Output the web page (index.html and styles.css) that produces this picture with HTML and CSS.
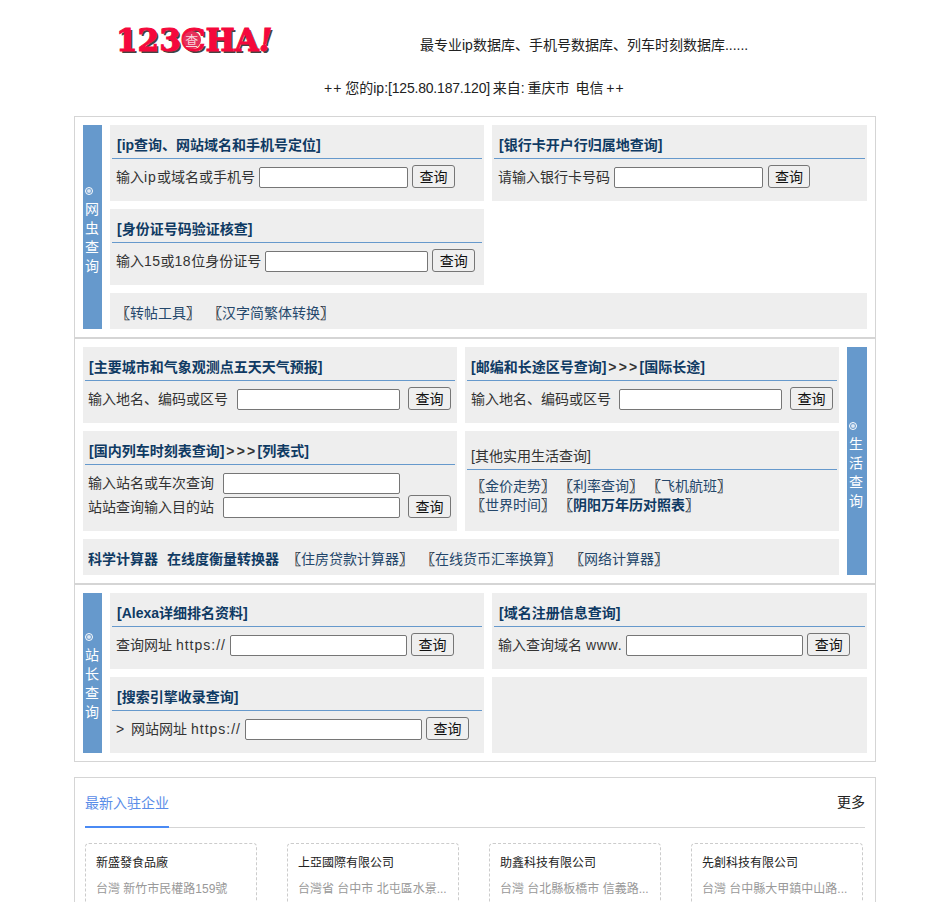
FILE: index.html
```html
<!DOCTYPE html>
<html lang="zh-CN">

<head>
    <meta charset="UTF-8">
    <title>123cha</title>
    <link rel="stylesheet" href="styles.css">
</head>

<body>
    <div class="top">
        <div class="logo">123<span class="logo-c">C<i>查</i></span>HA<em>!</em></div>
        <div class="slogan">最专业ip数据库、手机号数据库、列车时刻数据库......</div>
    </div>
    <div class="myip"><span class="plus">++</span> 您的ip:<span class="addr">[125.80.187.120]</span> 来自: 重庆市&nbsp; 电信 <span class="plus">++</span></div>

    <div class="wrap">
        <div class="sec sec-a">
            <div class="side side-19"><b></b>网虫查询</div>
            <div class="grid grid-757">
                <div class="block">
                    <div class="tit">[ip查询、网站域名和手机号定位]</div>
                    <div class="row"><span class="lab">输入<span class="sp1">ip</span>或域名或手机号</span><input class="w149" type="text"><button>查询</button></div>
                </div>
                <div class="block">
                    <div class="tit">[银行卡开户行归属地查询]</div>
                    <div class="row row-bank"><span class="lab">请输入银行卡号码</span><input class="w149" type="text"><button>查询</button></div>
                </div>
                <div class="block">
                    <div class="tit">[身份证号码验证核查]</div>
                    <div class="row"><span class="lab">输入<span class="sp05">15</span>或<span class="sp05">18</span>位身份证号</span><input class="w163" type="text"><button>查询</button></div>
                </div>
                <div></div>
                <div class="strip">
                    <a><i class="br">〖</i>转帖工具<i class="br">〗</i></a><a><i class="br">〖</i>汉字简繁体转换<i class="br">〗</i></a>
                </div>
            </div>
        </div>

        <div class="sec">
            <div class="grid grid-756">
                <div class="block">
                    <div class="tit">[主要城市和气象观测点五天天气预报]</div>
                    <div class="row row-b"><span class="lab lab-145">输入地名、编码或区号</span><input class="w163 mr4" type="text"><button>查询</button></div>
                </div>
                <div class="block">
                    <div class="tit">[邮编和长途区号查询]<span class="arr">&gt;&gt;&gt;</span>[国际长途]</div>
                    <div class="row"><span class="lab lab-144">输入地名、编码或区号</span><input class="w163 mr4" type="text"><button>查询</button></div>
                </div>
                <div class="block block-tall">
                    <div class="tit">[国内列车时刻表查询]<span class="arr">&gt;&gt;&gt;</span>[列表式]</div>
                    <div class="train">
                        <div class="train-rows">
                            <div class="train-row"><span class="lab lab-135">输入站名或车次查询</span><input class="w177" type="text"></div>
                            <div class="train-row"><span class="lab lab-135">站站查询输入目的站</span><input class="w177" type="text"></div>
                        </div>
                        <button>查询</button>
                    </div>
                </div>
                <div class="block block-tall">
                    <div class="tit tit-plain">[其他实用生活查询]</div>
                    <div class="links">
                        <div><a><i class="br">〖</i>金价走势<i class="br">〗</i></a><a><i class="br">〖</i>利率查询<i class="br">〗</i></a><a><i class="br">〖</i>飞机航班<i class="br">〗</i></a></div>
                        <div><a><i class="br">〖</i>世界时间<i class="br">〗</i></a><a class="bold"><i class="br">〖</i>阴阳万年历对照表<i class="br">〗</i></a></div>
                    </div>
                </div>
                <div class="strip strip-calc">
                    <a class="bold">科学计算器</a><a class="bold">在线度衡量转换器</a><a class="pull"><i class="br">〖</i>住房贷款计算器<i class="br">〗</i></a><a class="pull"><i class="br">〖</i>在线货币汇率换算<i class="br">〗</i></a><a><i class="br">〖</i>网络计算器<i class="br">〗</i></a>
                </div>
            </div>
            <div class="side side-20"><b></b>生活查询</div>
        </div>

        <div class="sec sec-a sec-last">
            <div class="side side-19"><b></b>站长查询</div>
            <div class="grid grid-757">
                <div class="block">
                    <div class="tit">[Alexa详细排名资料]</div>
                    <div class="row"><span class="lab">查询网址 <span class="sp1">https://</span></span><input class="w177" type="text"><button>查询</button></div>
                </div>
                <div class="block">
                    <div class="tit">[域名注册信息查询]</div>
                    <div class="row"><span class="lab">输入查询域名 <span class="sp075">www.</span></span><input class="w177" type="text"><button>查询</button></div>
                </div>
                <div class="block">
                    <div class="tit">[搜索引擎收录查询]</div>
                    <div class="row"><span class="lab"><span class="sp2">&gt; </span>网站网址 <span class="sp1">https://</span></span><input class="w177" type="text"><button>查询</button></div>
                </div>
                <div class="block"></div>
            </div>
        </div>
    </div>

    <div class="news">
        <div class="news-head">
            <span class="news-title">最新入驻企业</span>
            <a class="more">更多</a>
        </div>
        <ul class="news-list">
            <li>
                <h4>新盛發食品廠</h4>
                <p>台灣 新竹市民權路159號</p>
            </li>
            <li>
                <h4>上亞國際有限公司</h4>
                <p>台灣省 台中市 北屯區水景...</p>
            </li>
            <li>
                <h4>助鑫科技有限公司</h4>
                <p>台灣 台北縣板橋市 信義路...</p>
            </li>
            <li>
                <h4>先創科技有限公司</h4>
                <p>台灣 台中縣大甲鎮中山路...</p>
            </li>
        </ul>
    </div>
</body>

</html>
```

FILE: styles.css
```css
* {
    padding: 0;
    margin: 0;
    box-sizing: border-box;
}

html,
body {
    height: 902px;
    overflow: hidden;
}

body {
    background-color: #fff;
    color: #333;
    font-family: "Liberation Sans", "Noto Sans CJK SC", sans-serif;
    font-size: 14px;
    text-spacing-trim: space-all;
}

li {
    list-style: none;
}

.top {
    height: 72px;
    padding: 22px 0 0 116px;
    display: flex;
}

.logo {
    width: 304px;
    height: 36px;
    color: #f5083c;
    font-family: "DejaVu Serif", serif;
    font-size: 31px;
    font-weight: bold;
    line-height: 36px;
    letter-spacing: 0;
    white-space: nowrap;
    -webkit-text-stroke: 1px #f5083c;
    text-shadow: 2px 2px 0 #444;
}

.logo em {
    font-style: italic;
}

.logo-c {
    position: relative;
}

.logo-c i {
    position: absolute;
    left: 2px;
    top: 9px;
    width: 18px;
    height: 18px;
    border-radius: 50%;
    background-color: #e5305a;
    color: #f9d5dc;
    font-family: "Noto Sans CJK SC", sans-serif;
    font-size: 13px;
    font-style: normal;
    font-weight: normal;
    line-height: 18px;
    text-align: center;
    -webkit-text-stroke: 0;
    text-shadow: none;
}

.slogan {
    padding-top: 13px;
    color: #222;
    line-height: 20px;
}

.myip {
    width: 802px;
    margin-left: 74px;
    height: 44px;
    padding: 6px 0 0 250px;
    color: #222;
    line-height: 20px;
    word-spacing: -1px;
}

.plus {
    letter-spacing: 1px;
}

.addr {
    letter-spacing: -0.2px;
}

.wrap {
    width: 802px;
    margin-left: 74px;
    border: 1px solid #d5d5d5;
}

.sec {
    display: flex;
    gap: 8px;
    padding: 8px;
    border-bottom: 2px solid #d5d5d5;
}

.sec-last {
    border-bottom: none;
}

.side {
    flex: none;
    display: flex;
    flex-direction: column;
    align-items: flex-start;
    justify-content: center;
    background-color: #6699cc;
    color: #fff;
    line-height: 19px;
    word-break: break-all;
    padding: 2px 2px 0;
}

/* small ring above the vertical label */
.side b {
    display: block;
    width: 8px;
    height: 8px;
    margin: 6px 0 5px;
    border: 1px solid #fff;
    border-radius: 50%;
    background: radial-gradient(circle, #dfe9f4 0, #dfe9f4 30%, #6699cc 60%);
}

.side-19 {
    width: 19px;
}

.side-20 {
    width: 20px;
    padding-top: 4px;
}

.grid {
    display: grid;
    gap: 8px;
}

.grid-757 {
    width: 757px;
    grid-template-columns: 374px 375px;
}

.grid-756 {
    width: 756px;
    grid-template-columns: 374px 374px;
}

.block {
    height: 76px;
    padding: 0 2px;
    background-color: #eeeeee;
}

.block-tall {
    height: 100px;
}

.tit {
    height: 34px;
    padding: 10px 4px 0;
    border-bottom: 1px solid #6699cc;
    color: #0f3a63;
    font-weight: bold;
    line-height: 20px;
}

.sec-a .tit {
    padding-left: 5px;
}

.tit-plain {
    height: 39px;
    padding-top: 15px;
    color: #333;
    font-weight: normal;
}

.arr {
    letter-spacing: 2.2px;
    margin-left: 2px;
    color: #333;
}

.row {
    display: flex;
    align-items: flex-end;
    gap: 4px;
    padding: 6px 0 0 4px;
}

.row-b {
    padding-left: 3px;
}

.row-bank button {
    width: 42px;
    margin-left: 1px;
}

.lab {
    color: #333;
    padding-top: 2px;
    line-height: 21px;
    white-space: nowrap;
}

.lab-145 {
    width: 145px;
}

.lab-144 {
    width: 144px;
}

.lab-135 {
    width: 135px;
    padding-top: 0;
}

.sp05 {
    letter-spacing: 0.5px;
}

.sp075 {
    letter-spacing: 0.75px;
}

.sp1 {
    letter-spacing: 1px;
}

.sp2 {
    letter-spacing: 1.5px;
}

input {
    height: 21px;
    border: 1px solid #767676;
    border-radius: 2px;
    background-color: #fff;
}

.w149 {
    width: 149px;
}

.w163 {
    width: 163px;
}

.w177 {
    width: 177px;
}

.mr4 {
    margin-right: 4px;
}

button {
    width: 43px;
    height: 23px;
    padding-top: 1px;
    border: 1px solid #767676;
    border-radius: 3px;
    background-color: #efefef;
    color: #111;
    font-family: "Liberation Sans", "Noto Sans CJK SC", sans-serif;
    font-size: 14px;
    line-height: 19px;
}

.train {
    display: flex;
    align-items: flex-end;
    gap: 8px;
    padding: 8px 0 0 3px;
}

.train-rows {
    display: flex;
    flex-direction: column;
    gap: 3px;
}

.train-row {
    display: flex;
    align-items: center;
    height: 21px;
}

a {
    color: #24476b;
    white-space: nowrap;
}

.br {
    color: #10202f;
    font-style: normal;
    font-weight: normal;
    -webkit-text-stroke: 0.25px #10202f;
}

.bold {
    font-weight: bold;
    color: #0f3a63;
}

.links {
    padding: 7px 0 0 4px;
    line-height: 19px;
}

.links a {
    margin-right: 4px;
}

.strip {
    grid-column: 1 / 3;
    height: 36px;
    display: flex;
    gap: 8px;
    padding: 10px 0 0 6px;
    background-color: #eeeeee;
    line-height: 20px;
}

.strip-calc {
    gap: 9px;
    padding-left: 5px;
}

.pull {
    margin-left: -1px;
}

.news {
    width: 802px;
    margin: 15px 0 0 74px;
    padding: 0 10px;
    border: 1px solid #d5d5d5;
    height: 300px;
}

.news-head {
    height: 50px;
    display: flex;
    justify-content: space-between;
    border-bottom: 1px solid #d5d5d5;
}

.news-title {
    height: 50px;
    padding-top: 15px;
    border-bottom: 2px solid #4a8af4;
    color: #5b8de8;
    line-height: 20px;
}

.more {
    padding-top: 14px;
    color: #222;
    line-height: 20px;
}

.news-list {
    display: flex;
    gap: 30px;
    padding-top: 15px;
}

.news-list li {
    width: 172px;
    height: 120px;
    padding: 11px 10px 10px;
    border: 1px dashed #ccc;
    border-radius: 4px;
}

.news-list h4 {
    color: #222;
    font-size: 12px;
    font-weight: normal;
    line-height: 17px;
}

.news-list p {
    margin-top: 9px;
    color: #999;
    font-size: 12px;
    line-height: 17px;
    white-space: nowrap;
}
```
